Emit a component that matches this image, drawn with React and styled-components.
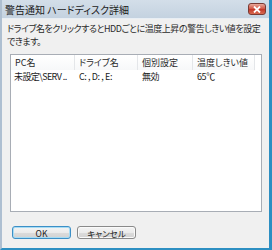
import React from "react";
import styled, { createGlobalStyle } from "styled-components";

const Global = createGlobalStyle`
  html, body { margin: 0; padding: 0; background: #ffffff; }
  body { font-family: "Noto Sans CJK JP", "Liberation Sans", sans-serif; }
`;

const Window = styled.div`
  width: 272px;
  height: 250px;
  box-sizing: border-box;
  display: flex;
  flex-direction: column;
  background: #bfcfdf;
  border-right: 3px solid #2d8fc2;
  border-bottom: 2px solid #2d8fc2;
  border-left: 2px solid #aebfd1;
`;

const TitleBar = styled.div`
  height: 18px;
  flex: none;
  display: flex;
  align-items: center;
  padding: 0 3px 0 3px;
  background: linear-gradient(#d3dee9, #c4d2e0);
  font-size: 10px;
  color: #1b1b1b;
  font-feature-settings: "palt";
  white-space: nowrap;
`;

const CloseButton = styled.div`
  margin-left: auto;
  width: 18px;
  height: 12px;
  border-radius: 3px;
  border: 1px solid #7a3a33;
  background: linear-gradient(#e9a99c, #d45a48 45%, #c4392a 55%, #d86a50);
  display: flex;
  align-items: center;
  justify-content: center;
  box-sizing: border-box;
`;

const Body = styled.div`
  flex: 1;
  background: #f0f0f0;
  border-top: 1px solid #e8eef4;
  display: flex;
  flex-direction: column;
  padding: 0 7px 0 8px;
`;

const Message = styled.p`
  margin: 3px -5px 0 -3px;
  font-size: 9px;
  line-height: 13px;
  color: #2a2a2a;
  font-feature-settings: "palt";
  letter-spacing: -0.45px;
`;

const ListBox = styled.div`
  margin-top: 6px;
  height: 158px;
  flex: none;
  background: #ffffff;
  border: 1px solid #a8adb5;
  box-sizing: border-box;
  display: flex;
  flex-direction: column;
`;

const Row = styled.div`
  display: grid;
  grid-template-columns: 64px 63px 55px 62px;
  height: ${(p) => (p.$header ? "15px" : "13px")};
`;

const HeadCell = styled.div`
  font-size: 9px;
  color: #2a2a2a;
  padding-left: 4px;
  display: flex;
  align-items: center;
  border-right: 1px solid #e4e6e9;
  font-feature-settings: "palt";
  white-space: nowrap;
  background: linear-gradient(#ffffff, #f7f8f9);
`;

const Cell = styled.div`
  font-size: 9px;
  color: #1a1a1a;
  padding-left: ${(p) => (p.$first ? "3px" : "4px")};
  display: flex;
  align-items: center;
  font-feature-settings: "palt";
  letter-spacing: ${(p) => (p.$first ? "-0.6px" : "-0.4px")};
  white-space: nowrap;
  overflow: hidden;
`;

const Buttons = styled.div`
  display: flex;
  gap: 6px;
  margin-top: 14px;
  padding-left: 2px;
`;

const Button = styled.div`
  width: 59px;
  height: 13px;
  box-sizing: border-box;
  border-radius: 3px;
  border: 1px solid ${(p) => (p.$default ? "#3c8fc6" : "#8a8a8a")};
  box-shadow: ${(p) => (p.$default ? "inset 0 0 0 1px #a6dcf5" : "inset 0 0 0 1px #fafafa")};
  background: linear-gradient(#f4f4f4 0%, #ebebeb 50%, #dcdcdc 51%, #d2d2d2 100%);
  display: flex;
  align-items: center;
  justify-content: center;
  font-size: 8.5px;
  color: #1a1a1a;
  font-feature-settings: "palt";
`;

export default function App() {
  return (
    <>
      <Global />
      <Window>
        <TitleBar>
          警告通知 ハードディスク詳細
          <CloseButton>
            <svg width="8" height="7" viewBox="0 0 8 7">
              <path d="M1 0.5 L7 6.5 M7 0.5 L1 6.5" stroke="#ffffff" strokeWidth="1.8" />
            </svg>
          </CloseButton>
        </TitleBar>
        <Body>
          <Message>
            ドライブ名をクリックするとHDDごとに温度上昇の警告しきい値を設定できます。
          </Message>
          <ListBox>
            <Row $header>
              <HeadCell>PC名</HeadCell>
              <HeadCell>ドライブ名</HeadCell>
              <HeadCell>個別設定</HeadCell>
              <HeadCell>温度しきい値</HeadCell>
            </Row>
            <Row>
              <Cell $first>未設定\SERV ..</Cell>
              <Cell>C: , D: , E:</Cell>
              <Cell>無効</Cell>
              <Cell>65℃</Cell>
            </Row>
          </ListBox>
          <Buttons>
            <Button $default>OK</Button>
            <Button>キャンセル</Button>
          </Buttons>
        </Body>
      </Window>
    </>
  );
}
